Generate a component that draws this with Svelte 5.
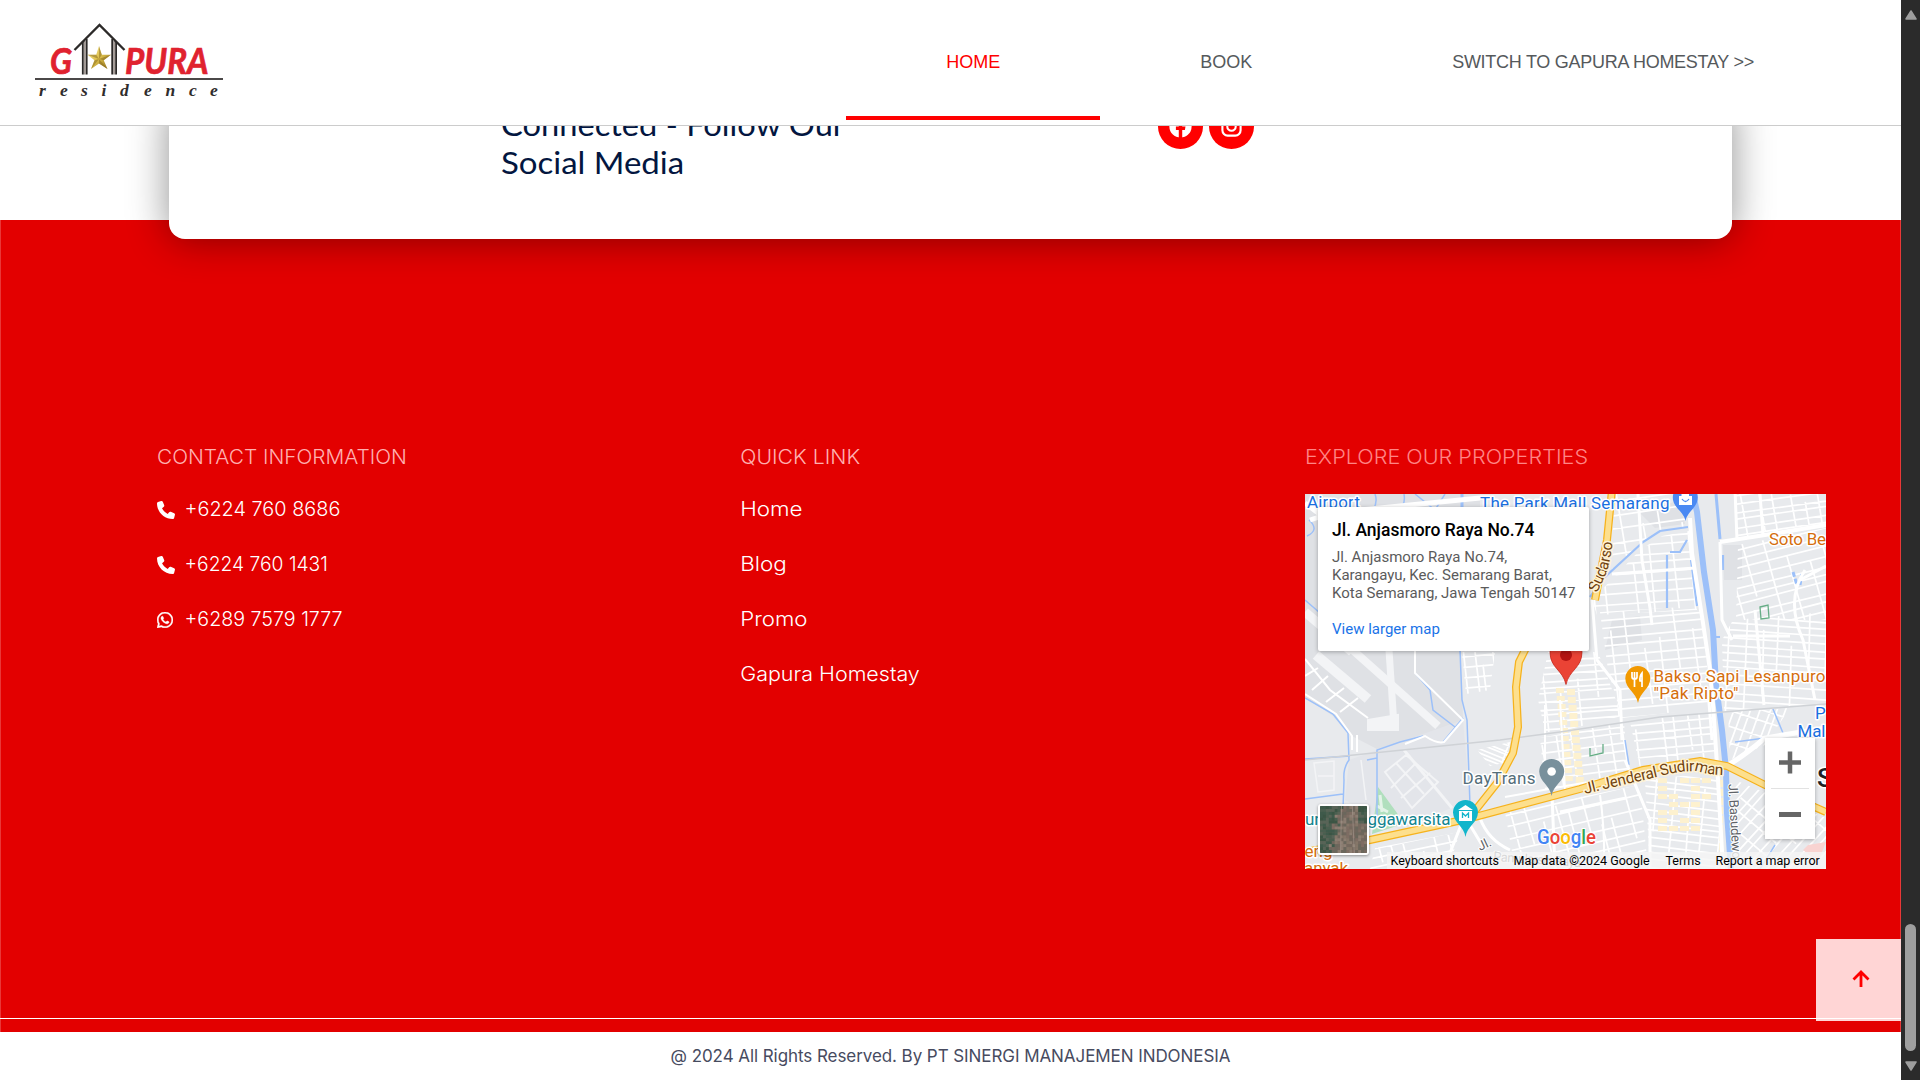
<script>
  const nav = [
    { label: 'HOME', active: true, cls: 'n1' },
    { label: 'BOOK', cls: 'n2' },
    { label: 'SWITCH TO GAPURA HOMESTAY >>', cls: 'n3' }
  ];
  const contacts = [
    { icon: 'phone', text: '+6224 760 8686', cls: 'c1' },
    { icon: 'phone', text: '+6224 760 1431', cls: 'c2' },
    { icon: 'whatsapp', text: '+6289 7579 1777', cls: 'c3' }
  ];
  const links = [
    { text: 'Home', cls: 'l1' },
    { text: 'Blog', cls: 'l2' },
    { text: 'Promo', cls: 'l3' },
    { text: 'Gapura Homestay', cls: 'l4' }
  ];

  let seed = 11;
  const rnd = () => {
    seed = (seed * 16807) % 2147483647;
    return seed / 2147483647;
  };

  // Residential blocks: parallel streets plus short cross streets, clipped to each block.
  const districts = [
    { pts: '1614,494 1680,494 1688,527 1660,531 1640,545 1612,570', a: -8, row: 13, gap: 20 },
    { pts: '1592,600 1640,550 1662,536 1689,531 1697,610 1597,615', a: -4, row: 10, gap: 14 },
    { pts: '1600,612 1700,606 1712,708 1622,718 1608,670', a: -5, row: 9, gap: 15 },
    { pts: '1548,652 1598,652 1622,716 1546,735 1538,700', a: -4, row: 7, gap: 16 },
    { pts: '1735,494 1826,494 1826,527 1738,540', a: -8, row: 8, gap: 16 },
    { pts: '1738,545 1826,528 1826,620 1736,620', a: -14, row: 9, gap: 17 },
    { pts: '1733,620 1826,612 1826,704 1724,712 1722,640', a: 4, row: 8, gap: 15 },
    { pts: '1540,738 1624,722 1628,772 1545,790', a: -7, row: 8, gap: 18 },
    { pts: '1630,722 1712,712 1717,758 1640,768', a: -5, row: 9, gap: 13 },
    { pts: '1505,812 1640,785 1648,869 1515,869', a: -13, row: 11, gap: 14 },
    { pts: '1645,780 1716,772 1722,869 1650,869', a: 7, row: 7, gap: 17 },
    { pts: '1735,780 1826,818 1826,869 1738,869', a: -48, row: 9, gap: 16 },
    { pts: '1728,712 1790,708 1765,745 1730,760', a: -70, row: 8, gap: 15 },
    { pts: '1375,848 1460,832 1448,869 1370,869', a: -12, row: 10, gap: 15 },
    { pts: '1462,652 1495,652 1490,690 1466,694', a: -5, row: 9, gap: 11 },
    { pts: '1477,750 1510,742 1508,762 1490,766', a: 22, row: 4, gap: 30 }
  ].map((d, id) => {
    const p = d.pts.split(' ').map((s) => s.split(',').map(Number));
    const cx = p.reduce((s, q) => s + q[0], 0) / p.length;
    const cy = p.reduce((s, q) => s + q[1], 0) / p.length;
    let path = '';
    for (let y = -90; y < 90; y += d.row * (0.8 + rnd() * 0.4)) {
      path += `M-100 ${y.toFixed(1)}L100 ${(y + rnd() * 4 - 2).toFixed(1)}`;
    }
    for (let x = -100; x < 100; x += d.gap * (0.7 + rnd() * 0.6)) {
      const from = -90 + rnd() * 90;
      path += `M${x.toFixed(1)} ${from.toFixed(1)}L${(x + 3).toFixed(1)} ${(from + 50 + rnd() * 90).toFixed(1)}`;
    }
    return { id: `district-${id}`, pts: d.pts, path, tf: `translate(${cx} ${cy}) rotate(${d.a})` };
  });

  const shops = [];
  for (let y = 688; y < 785; y += 8) {
    shops.push([1556 + (y - 688) * 0.1, y, 8, 5], [1567 + (y - 688) * 0.1, y + 1, 8, 6]);
  }
  for (let y = 778; y < 832; y += 8) {
    for (let x = 1658; x < 1712; x += 11) if (rnd() > 0.25) shops.push([x, y, 9, 5]);
  }
  for (let y = 780; y < 866; y += 9) shops.push([1719, y, 4, 7]);

  const tones = ['#75695f', '#857769', '#6f675d', '#8c7e72', '#7e6d63', '#6a675c'];
  const greens = ['#3f5a4b', '#4a5f50', '#3b5544', '#586457'];
  const pixels = [];
  for (let y = 0; y < 16; y++) {
    for (let x = 0; x < 16; x++) {
      const set = x + y * 0.2 < 5 + rnd() * 3 || (x > 12 && y < 6) ? greens : tones;
      pixels.push({ x: x * 3, y: y * 3, f: set[Math.floor(rnd() * set.length)] });
    }
  }
</script>

<div class="page">
  <div class="site">
    <header>
      <svg class="logo" viewBox="30 20 200 84" width="200" height="84">
        <defs>
          <linearGradient id="gold" x1="0" y1="0" x2="1" y2="1">
            <stop offset="0" stop-color="#f7ea9a" /><stop offset=".5" stop-color="#dcbf4c" /><stop offset="1" stop-color="#8a6a18" />
          </linearGradient>
        </defs>
        <g class="brand">
          <text x="50" y="73.500" textLength="22" lengthAdjust="spacingAndGlyphs">G</text>
          <text x="125" y="73.500" textLength="83.500" lengthAdjust="spacingAndGlyphs">PURA</text>
        </g>
        <path d="M84.700 41V74.500M114.200 41V74.500" stroke="#a39a95" stroke-width="2" />
        <path d="M82.800 41V74.500M86.700 39V74.500M112.200 39V74.500M116.100 41V74.500" stroke="#2c2a29" stroke-width="1.800" />
        <path d="M74.500 50L99.500 25L124.500 50" fill="none" stroke="#2c2a29" stroke-width="2.300" />
        <path d="M99 46L101.800 54.800L111 54.800L103.700 60.200L107.500 69L99 63.500L91 69L94.500 60.200L87.500 54.800L96.200 54.800Z" fill="url(#gold)" />
        <path d="M99 46L99 59L101.800 54.800ZM111 54.800L99 59L103.700 60.200ZM107.500 69L99 59L99 63.500ZM91 69L99 59L94.500 60.200ZM87.500 54.800L99 59L96.200 54.800Z" fill="#7d6018" opacity=".45" />
        <path d="M35 79H223" stroke="#4b4848" stroke-width="2" />
        <text class="sub" y="96" x="39 60 81 101.500 120 144 165.500 189 210">residence</text>
      </svg>
      <nav>
        {#each nav as n}
          <a class:active={n.active}><span class={n.cls}>{n.label}</span></a>
        {/each}
      </nav>
    </header>

    <section class="follow">
      <div class="card">
        <h2><span class="h-a">Connected - Follow Our</span><span class="h-b">Social Media</span></h2>
        <div class="social">
          <span class="dot">
            <svg viewBox="0 0 24 24" width="23" height="23"><circle cx="12" cy="12" r="11.600" fill="#fff" /><path d="M10.200 24V15.600H7.200V12.100H10.200V9.500C10.200 6.500 12 4.900 14.700 4.900C16 4.900 17.300 5.100 17.300 5.100V8H15.800C14.300 8 13.800 9 13.800 9.900V12.100H17.200L16.600 15.600H13.800V24Z" fill="#f00" /></svg>
          </span>
          <span class="dot">
            <svg viewBox="0 0 24 24" width="23" height="23" fill="none" stroke="#fff" stroke-width="2.200"><rect x="2.500" y="2.500" width="19" height="19" rx="5.500" /><circle cx="12" cy="12" r="4.400" /><circle cx="17.600" cy="6.400" r=".4" /></svg>
          </span>
        </div>
      </div>
    </section>

    <section class="info">
      <div class="columns">
        <div class="col contact">
          <h3><span class="t1">CONTACT INFORMATION</span></h3>
          <ul>
            {#each contacts as c}
              <li>
                {#if c.icon === 'phone'}
                  <svg viewBox="0 0 512 512" width="18" height="18" fill="#fff"><path d="M164.900 24.600c-7.700-18.600-28-28.500-47.400-23.200l-88 24C12.100 30.200 0 46 0 64c0 247.400 200.600 448 448 448c18 0 33.800-12.100 38.600-29.500l24-88c5.300-19.400-4.600-39.700-23.200-47.400l-96-40c-16.300-6.800-35.200-2.100-46.300 11.600L304.700 368C234.300 334.700 177.300 277.700 144 207.300L193.300 167c13.700-11.200 18.400-30 11.600-46.300l-40-96z" /></svg>
                {:else}
                  <svg viewBox="0 0 448 448" width="16" height="16" fill="#fff" stroke="#fff" stroke-width="12"><path d="M380.900 65.100C339 23.100 283.200 0 223.900 0 101.500 0 1.900 99.600 1.900 222c0 39.100 10.200 77.300 29.600 111L0 448l117.700-30.900c32.400 17.700 68.900 27 106.100 27h.1c122.300 0 224.100-99.600 224.100-222 0-59.300-25.200-115-67.100-157zm-157 341.600c-33.200 0-65.700-8.900-94-25.700l-6.700-4-69.800 18.300L72 327.200l-4.400-7c-18.500-29.400-28.200-63.300-28.200-98.200 0-101.700 82.800-184.500 184.600-184.500 49.300 0 95.600 19.200 130.400 54.100 34.800 34.900 56.200 81.200 56.100 130.500 0 101.800-84.900 184.600-186.600 184.600zm101.200-138.200c-5.500-2.800-32.800-16.200-37.900-18-5.100-1.900-8.800-2.800-12.500 2.800-3.700 5.600-14.300 18-17.600 21.800-3.200 3.700-6.500 4.200-12 1.400-32.600-16.300-54-29.100-75.500-66-5.700-9.800 5.700-9.100 16.300-30.300 1.800-3.700.9-6.900-.5-9.700-1.400-2.800-12.500-30.100-17.100-41.200-4.500-10.800-9.100-9.300-12.500-9.500-3.200-.2-6.900-.2-10.600-.2-3.700 0-9.700 1.400-14.800 6.900-5.100 5.600-19.400 19-19.400 46.300 0 27.300 19.900 53.700 22.600 57.400 2.800 3.700 39.100 59.700 94.800 83.800 35.200 15.200 49 16.500 66.600 13.900 10.700-1.600 32.800-13.400 37.400-26.400 4.600-13 4.600-24.100 3.200-26.400-1.300-2.500-5-3.900-10.500-6.600z" /></svg>
                {/if}
                <span class={c.cls}>{c.text}</span>
              </li>
            {/each}
          </ul>
        </div>

        <div class="col quick">
          <h3><span class="t2">QUICK LINK</span></h3>
          <ul>
            {#each links as l}<li><span class={l.cls}>{l.text}</span></li>{/each}
          </ul>
        </div>

        <div class="col explore">
          <h3 class="faint"><span class="t3">EXPLORE OUR PROPERTIES</span></h3>
          <div class="map">
            <svg class="canvas" viewBox="1305 494 521 375" width="521" height="375">
              <defs>
                {#each districts as d}
                  <clipPath id={d.id}><polygon points={d.pts} /></clipPath>
                {/each}
                <path id="sudirman" d="M1585 794C1613 787 1640 781 1657 777C1675 772 1690 770 1700 772C1710 774.500 1717 775.500 1730 775" />
                <path id="sudarso" d="M1597 593L1606 574Q1611 560 1613 538" />
              </defs>
              <rect x="1305" y="494" width="521" height="375" fill="#e8eaed" />
              <path d="M1305 494H1480V507L1460 640L1463 718L1443 740L1423 735L1377 749L1350 735L1333 716L1305 697Z" fill="#dfe1e5" />
              <path d="M1349 760L1377 750L1463 720L1470 800L1400 830L1345 800Z" fill="#e3e5ea" />
              <path d="M1612 620L1640 616L1642 640L1605 650ZM1640 513L1680 500L1685 524L1655 528ZM1723 545H1742V580H1724Z" fill="#dfe1e5" />

              <g fill="none" stroke="#f3f4f6">
                <path d="M1347 645L1438 726" stroke-width="8" />
                <path d="M1316 655L1368 699" stroke-width="10" />
                <path d="M1389 650L1394 726" stroke-width="7" />
                <path d="M1368 720L1398 715V730H1368Z" fill="#f3f4f6" stroke-width="2" />
                <path d="M1305 612L1352 652" stroke-width="9" />
                <path d="M1404 750L1452 808" stroke-width="3" />
                <path d="M1385 772L1406 755L1438 782L1412 808ZM1396 763L1424 794M1391 788L1416 763M1401 798L1430 773" stroke-width="2" />
                <path d="M1314 763L1334 761V790L1318 792ZM1361 760L1366 800M1318 776H1334" stroke-width="1.500" />
              </g>

              {#each districts as d}
                <g clip-path="url(#{d.id})"><path d={d.path} transform={d.tf} fill="none" stroke="#fff" stroke-width="1.700" /></g>
              {/each}
              {#each shops as s}
                <rect x={s[0]} y={s[1]} width={s[2]} height={s[3]} fill="#fdf1cf" />
              {/each}

              <path d="M1378 787L1397 813L1403 824L1372 834Z" fill="#b0dfbd" />
              <path d="M1380 795L1382 812M1377 806L1388 812" stroke="#e3f3e7" stroke-width="3" />
              <path d="M1760 607L1768 605L1769 618L1761 619ZM1590 748V756L1603 753V744" fill="none" stroke="#66ad86" stroke-width="1.300" />
              <path d="M1808 845L1826 842L1818 862L1803 850Z" fill="#f8d3d1" />

              <!-- waterways -->
              <g fill="none" stroke="#9cc0f9" stroke-width="1.500">
                <path d="M1305 698L1333 714L1348 733L1349 760Q1343 768 1344 780L1343 809M1305 759L1350 756M1367 760L1377 758M1305 799L1343 794M1460 650L1462 700L1467 720L1470 805M1415 673L1430 690L1433 710L1455 727M1463 718L1443 742M1377 824L1377 750L1400 742L1423 736M1305 600L1320 613M1375 494Q1378 502 1373 510M1415 494L1435 510L1445 494M1398 510Q1406 505 1404 494M1309 520Q1320 530 1307 536M1625 740L1629 765M1773 709L1783 733M1735 742L1765 738M1760 869L1775 845" />
                <path d="M1688 527L1660 531L1643 542L1605 577L1590 597M1667 555V608M1670 552H1680L1687 540M1691 560L1697 606M1723 555V570M1714 637H1720" stroke-width="2.200" />
                <path d="M1716 494L1720 539M1462 494V508" stroke-width="3" />
                <path d="M1793 572L1797 585M1802 574L1800 585" stroke-width="3" stroke-dasharray="5 2" />
              </g>
              <path d="M1693 494L1697 512L1704 572L1713 630L1716 685L1722 730L1726 770L1727 813L1731 869" fill="none" stroke="#9cc0f9" stroke-width="6" />

              <!-- main white streets -->
              <g fill="none" stroke="#fff" stroke-width="3">
                <path d="M1690 518L1692 553L1703 623L1710 670L1713 705L1718 780L1723 869M1720 542L1765 535L1826 525" stroke-width="4" />
                <path d="M1638 494L1642 560L1650 608L1652 625M1592 600L1597 660L1620 690L1622 740M1720 542L1722 620L1732 640M1733 636H1790M1755 610L1764 705M1805 570Q1785 600 1803 640L1815 700M1800 580L1826 566M1612 574L1695 568M1735 490L1737 540M1760 494L1763 535" />
                <path d="M1727 766Q1745 755 1765 738L1826 728" stroke-width="5" />
                <path d="M1415 650V673L1463 720L1444 742Q1437 744 1425 736L1405 744M1305 694L1336 714L1352 736V750M1357 735V752M1305 659L1330 690L1368 718M1305 676L1318 668M1312 690L1328 676M1326 702L1344 688M1340 712L1358 698" stroke-width="2" />
                <path d="M1552 795L1555 869M1625 760L1650 820V869M1480 818Q1488 840 1510 850M1463 820L1448 858M1467 820L1485 850M1626 798L1560 812M1708 690L1712 740" />
                <path d="M1305 503L1322 516L1310 520M1360 510L1480 498" stroke-width="5" />
                <path d="M1545 705V780M1560 700L1565 790M1600 795Q1605 830 1604 869M1505 797L1700 762" stroke-width="2" />
              </g>
              <path d="M1305 760L1500 740L1560 732L1660 717L1826 704" fill="none" stroke="#cfd2d6" stroke-width="1.500" />

              <!-- arterial roads -->
              <g fill="none" stroke="#f6b21c" stroke-width="8">
                <path d="M1612 490L1607 540L1595 600M1530 640L1519 662L1516 687L1518 727L1513 753L1497 783L1474 812" />
                <path d="M1300 853L1370 840L1467 819L1580 789L1643 770L1700 761L1727 766L1765 785L1826 812" />
              </g>
              <g fill="none" stroke="#fddf8d" stroke-width="5.500">
                <path d="M1612 490L1607 540L1595 600M1530 640L1519 662L1516 687L1518 727L1513 753L1497 783L1474 812" />
                <path d="M1300 853L1370 840L1467 819L1580 789L1643 770L1700 761L1727 766L1765 785L1826 812" />
              </g>

              <!-- pins -->
              <g>
                <path d="M1685.500 521C1683.500 511 1673 508 1672.800 497.500A12.500 12.500 0 0 1 1697.800 497.500C1697.500 508 1687.500 511 1685.500 521Z" fill="#4a89f3" />
                <path d="M1679 496H1692V505H1679ZM1681.500 496V493H1689V496" fill="#fff" />
                <path d="M1682 499Q1685.500 504 1689 499" fill="none" stroke="#4a89f3" stroke-width="1.300" />
                <path d="M1638 703C1636 692 1625.500 689 1625.300 678.500A12.500 12.500 0 0 1 1650.300 678.500C1650 689 1640 692 1638 703Z" fill="#f29900" />
                <path d="M1632 672V677Q1632 679 1634.500 679Q1637 679 1637 677V672M1634.500 672V687M1642 687V673Q1639.500 676 1640 681H1642" fill="none" stroke="#fff" stroke-width="1.700" />
                <path d="M1551.600 796C1550 785 1539.500 782 1539.200 771.500A12.500 12.500 0 0 1 1564.200 771.500C1564 782 1553 785 1551.600 796Z" fill="#78909c" />
                <circle cx="1551.600" cy="771.500" r="4.300" fill="#fff" />
                <path d="M1465.500 837C1464 826 1453.500 823 1453 812.500A12.500 12.500 0 0 1 1478 812.500C1477.700 823 1467 826 1465.500 837Z" fill="#12b5cb" />
                <path d="M1458 810L1465.500 805L1473 810ZM1459 811H1472V821H1459Z" fill="#fff" />
                <path d="M1462.500 818V813L1465.500 816L1468.500 813V818" fill="none" stroke="#12b5cb" stroke-width="1.300" />
                <path d="M1566 684.500C1563 670 1550 668 1550 652A16 16 0 0 1 1582 652C1582 668 1569 670 1566 684.500Z" fill="#ea4335" stroke="#c5281c" stroke-width=".8" />
                <circle cx="1566" cy="655" r="6" fill="#b31412" />
              </g>

              <!-- labels -->
              <g class="lbl">
                <g fill="#1a6fe0">
                  <text x="1307" y="507.500" textLength="53">Airport</text>
                  <text x="1480" y="508.500" textLength="189.500">The Park Mall Semarang</text>
                  <text x="1815" y="719">P</text>
                  <text x="1797.500" y="736.500" textLength="28">Mal</text>
                </g>
                <g fill="#d56e0c">
                  <text x="1769" y="545" textLength="57">Soto Be</text>
                  <text x="1653.500" y="682" textLength="172">Bakso Sapi Lesanpuro</text>
                  <text x="1653.500" y="699" textLength="85">"Pak Ripto"</text>
                  <text x="1304.500" y="857">eng</text>
                  <text x="1304" y="874" textLength="44">anyak</text>
                </g>
                <text x="1462.500" y="784" textLength="73" fill="#546e7a">DayTrans</text>
                <g fill="#12848f">
                  <text x="1305" y="825">un</text>
                  <text x="1367.500" y="825" textLength="83">ggawarsita</text>
                </g>
                <g class="road" fill="#70420f">
                  <text><textPath href="#sudirman" textLength="141">Jl. Jenderal Sudirman</textPath></text>
                  <text><textPath href="#sudarso" textLength="54">Sudarso</textPath></text>
                </g>
                <g class="minor" fill="#5f6368">
                  <text transform="translate(1728.500 784) rotate(87)" textLength="75">Jl. Basudewo</text>
                  <text transform="translate(1480 851) rotate(-25)">Jl.</text>
                  <text transform="translate(1493 861) rotate(4)" textLength="88">Pamularsih Raya</text>
                </g>
                <text class="city" x="1817" y="787" fill="#202124">S</text>
              </g>
              <text class="google" x="1537" y="843.500" textLength="59" lengthAdjust="spacingAndGlyphs"><tspan fill="#4285f4">G</tspan><tspan fill="#ea4335">o</tspan><tspan fill="#fbbc05">o</tspan><tspan fill="#4285f4">g</tspan><tspan fill="#34a853">l</tspan><tspan fill="#ea4335">e</tspan></text>
            </svg>

            <div class="place">
              <strong>Jl. Anjasmoro Raya No.74</strong>
              <p>Jl. Anjasmoro Raya No.74,<br />Karangayu, Kec. Semarang Barat,<br />Kota Semarang, Jawa Tengah 50147</p>
              <a>View larger map</a>
            </div>

            <svg class="thumb" viewBox="0 0 48 48" preserveAspectRatio="none">
              {#each pixels as p}<rect x={p.x} y={p.y} width="3.200" height="3.200" fill={p.f} />{/each}
              <path d="M22 0L21 48M33 0L35 48" stroke="#a99c92" stroke-width=".6" />
            </svg>

            <div class="zoom">
              <svg viewBox="0 0 50 50" width="50" height="50"><path d="M14 24.500H36M25 13.500V35.500" stroke="#666" stroke-width="4.500" /></svg>
              <i></i>
              <svg viewBox="0 0 50 50" width="50" height="50"><path d="M14 25.500H36" stroke="#666" stroke-width="5" /></svg>
            </div>

            <div class="legal">
              <span class="g1">Keyboard shortcuts</span><span class="g2">Map data ©2024 Google</span><span class="g3">Terms</span><span class="g4">Report a map error</span>
            </div>
          </div>
        </div>
      </div>
      <hr />
      <div class="totop">
        <svg viewBox="0 0 18 18" width="18" height="18" fill="none" stroke="#f00" stroke-width="2.800"><path d="M9 17V3M1.500 9.500L9 2L16.500 9.500" /></svg>
      </div>
    </section>

    <footer><span>@ 2024 All Rights Reserved. By PT SINERGI MANAJEMEN INDONESIA</span></footer>
  </div>

  <div class="scroll">
    <svg viewBox="0 0 12 10" width="12" height="10"><path d="M6 1L11 9H1Z" fill="#9f9f9f" stroke="#9f9f9f" stroke-width="1.500" stroke-linejoin="round" /></svg>
    <div class="thumb-bar"></div>
    <svg class="down" viewBox="0 0 12 10" width="12" height="10"><path d="M6 9L11 1H1Z" fill="#9f9f9f" stroke="#9f9f9f" stroke-width="1.500" stroke-linejoin="round" /></svg>
  </div>
</div>

<style>
  :global(body) { margin: 0; overflow: hidden; }
  .page { display: grid; grid-template-columns: 1901px 19px; height: 1080px; width: 1920px; overflow: hidden; background: #fff; }
  .site { display: flex; flex-direction: column; height: 1080px; overflow: hidden; }
  h2, h3, ul, p { margin: 0; padding: 0; font-weight: 400; }
  li { list-style: none; }
  span { white-space: nowrap; }
  svg { display: block; flex: none; }

  header { position: relative; z-index: 3; flex: none; height: 125px; display: flex; justify-content: space-between; background: #fff; border-bottom: 1px solid #ccc; padding-right: 47px; }
  .logo { margin: 20px 0 0 30px; }
  .brand { font: italic 700 36px Lato, sans-serif; fill: #e0222f; stroke: #e0222f; stroke-width: .7px; }
  .sub { font: italic 700 17.500px "Liberation Serif", serif; fill: #2f2c2c; }
  nav { display: flex; height: 120px; }
  nav a { box-sizing: border-box; padding: 0 100px; border-bottom: 4px solid transparent; font: 18px/125px "Liberation Sans", Arial, sans-serif; color: #55595c; height: 120px; }
  nav a.active { color: #f00; border-color: #f00; }
  .n3 { letter-spacing: -.27px; }

  .follow { height: 94px; flex: none; padding: 0 169px; }
  .card { position: relative; z-index: 2; box-sizing: border-box; height: 139px; margin-top: -26px; border-radius: 16px; background: #fff; box-shadow: 0 0 40px rgba(0, 0, 0, .44); display: flex; padding: 4px 0 0 332px; }
  .card h2 { width: 657px; padding-top: 1px; font: 400 31px/38px Lato, sans-serif; color: #031640; }
  .card h2 span { display: block; width: max-content; transform-origin: 0 50%; }
  .h-a { transform: scaleX(1.053); }
  .h-b { transform: scaleX(1.064); }
  .social { display: flex; gap: 6px; }
  .dot { width: 45px; height: 45px; border-radius: 50%; background: #f00; display: grid; place-items: center; }

  .info { position: relative; box-sizing: border-box; height: 812px; flex: none; background: #e30000; border: solid rgba(255, 255, 255, .22); border-width: 0 1px; }
  .columns { display: flex; padding: 222px 0 0 156px; height: 576px; }
  .columns span { transform-origin: 0 50%; }
  .contact { width: 584px; }
  .quick { width: 564px; }
  h3 { font: 300 20px/30px Inter, "Open Sans", sans-serif; color: #ffb0b0; height: 30px; }
  h3.faint { color: #ff8585; }
  h3 span { display: inline-block; }
  .t1 { transform: scaleX(1.042); }
  .t2 { transform: translateX(-.7px) scaleX(1.062); }
  .t3 { transform: scaleX(1.08); }
  ul { padding-top: 10px; font: 300 20px/55px Inter, "Open Sans", sans-serif; color: #fff; }
  li { display: flex; align-items: center; height: 55px; }
  .c1 { transform: translateX(-.5px) scaleX(.993); }
  .c2 { transform: translateX(-.5px) scaleX(.963); }
  .c3 { transform: translateX(-.5px) scaleX(.982); }
  .l1 { transform: translateX(-.8px) scaleX(1.12); }
  .l2 { transform: translateX(-.8px) scaleX(1.12); }
  .l3 { transform: translateX(-.8px) scaleX(1.11); }
  .l4 { transform: translateX(-.8px) scaleX(1.073); }
  .contact svg { margin-right: 10px; }
  .contact svg[width='16'] { margin-right: 12px; }

  .map { position: relative; margin-top: 22px; width: 521px; height: 375px; overflow: hidden; font-family: Roboto, sans-serif; }
  .lbl { font: 400 17px Roboto, sans-serif; paint-order: stroke; stroke: #fff; stroke-width: 3px; stroke-linejoin: round; }
  .lbl .road { font-size: 15.500px; stroke: #fff3d4; }
  .lbl .minor { font-size: 13px; stroke-width: 2px; }
  .lbl .city { font-size: 26px; font-weight: 500; }
  .google { font: 500 20px Roboto, sans-serif; paint-order: stroke; stroke: #fff; stroke-width: 2px; }
  .place { position: absolute; left: 13px; top: 13px; box-sizing: border-box; width: 271px; height: 144px; padding: 12px 0 0 14px; background: #fff; border-radius: 2px; box-shadow: 0 1px 4px rgba(0, 0, 0, .3); }
  .place strong { display: block; font: 500 17.500px/23px Roboto, sans-serif; color: #000; white-space: nowrap; }
  .place p { font: 15px/18px Roboto, sans-serif; color: #5b5b5b; margin-top: 6px; white-space: nowrap; }
  .place a { display: block; font: 15px/18px Roboto, sans-serif; color: #1a73e8; margin-top: 18px; }
  .thumb { position: absolute; left: 13px; top: 310px; width: 47px; height: 47px; border: 2px solid #fff; border-radius: 3px; box-shadow: 0 1px 3px rgba(0, 0, 0, .4); background: #75695f; }
  .zoom { position: absolute; left: 460px; top: 244px; width: 50px; height: 101px; background: #fff; box-shadow: 0 1px 4px rgba(0, 0, 0, .3); }
  .zoom i { display: block; height: 1px; margin: 0 6px; background: #e2e2e2; }
  .legal { position: absolute; right: 0; bottom: 0; width: 439px; height: 17px; background: rgba(245, 245, 245, .8); font: 12.500px/18px Roboto, sans-serif; color: #000; display: flex; box-sizing: border-box; padding-left: 3.500px; }
  .g1 { width: 123px; }
  .g2 { width: 152px; }
  .g3 { width: 50px; }

  hr { margin: 0 -1px; border: 0; height: 1px; background: #fff; }
  .totop { position: absolute; right: -1px; top: 719px; width: 85px; height: 82px; background: linear-gradient(#ffd5d5 79px, #fff 79px 80px, #ffd5d5 80px); display: grid; place-items: center; }
  .totop svg { margin-left: 5px; margin-bottom: 2px; }

  footer { height: 48px; flex: none; display: flex; justify-content: center; background: #fff; font: 400 17px/49px Inter, sans-serif; letter-spacing: -.07px; color: #474b5f; }

  .scroll { display: flex; flex-direction: column; align-items: center; background: #2b2b2b; padding-top: 10px; }
  .thumb-bar { width: 11px; height: 127px; border-radius: 6px; background: #9f9f9f; margin-top: 904px; }
  .down { margin-top: 10px; }
</style>
